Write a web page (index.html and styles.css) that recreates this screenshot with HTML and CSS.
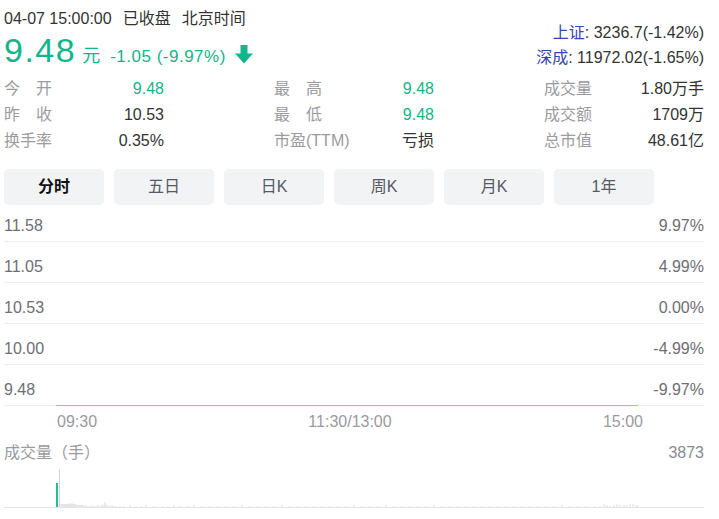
FILE: index.html
```html
<!DOCTYPE html>
<html lang="zh-CN">
<head>
<meta charset="utf-8">
<title>行情</title>
<link rel="stylesheet" href="styles.css">
</head>
<body>
<div class="page">
  <div class="top">
    <div class="quote">
      <div class="status"><span>04-07 15:00:00</span><span class="gap">已收盘</span><span class="gap">北京时间</span></div>
      <div class="price-row">
        <span class="price">9.48</span>
        <span class="unit">元</span>
        <span class="change">-1.05 (-9.97%)</span>
        <svg class="arrow" width="18" height="19" viewBox="0 0 18 19"><rect x="5.5" y="0" width="7" height="10" fill="#13b58b"/><polygon points="0,8.5 18,8.5 9,18.5" fill="#13b58b"/></svg>
      </div>
    </div>
    <div class="indices">
      <div class="idx"><span class="idx-name">上证</span>: 3236.7(-1.42%)</div>
      <div class="idx"><span class="idx-name">深成</span>: 11972.02(-1.65%)</div>
    </div>
  </div>

  <div class="stats">
    <div class="cell"><span class="lbl">今　开</span><span class="val green">9.48</span></div>
    <div class="cell"><span class="lbl">最　高</span><span class="val green">9.48</span></div>
    <div class="cell"><span class="lbl">成交量</span><span class="val">1.80万手</span></div>
    <div class="cell"><span class="lbl">昨　收</span><span class="val">10.53</span></div>
    <div class="cell"><span class="lbl">最　低</span><span class="val green">9.48</span></div>
    <div class="cell"><span class="lbl">成交额</span><span class="val">1709万</span></div>
    <div class="cell"><span class="lbl">换手率</span><span class="val">0.35%</span></div>
    <div class="cell"><span class="lbl">市盈(TTM)</span><span class="val">亏损</span></div>
    <div class="cell"><span class="lbl">总市值</span><span class="val">48.61亿</span></div>
  </div>

  <div class="tabs">
    <div class="tab active">分时</div>
    <div class="tab">五日</div>
    <div class="tab">日K</div>
    <div class="tab">周K</div>
    <div class="tab">月K</div>
    <div class="tab">1年</div>
  </div>

  <div class="chart">
    <div class="band first"><span>11.58</span><span>9.97%</span></div>
    <div class="band"><span>11.05</span><span>4.99%</span></div>
    <div class="band"><span>10.53</span><span>0.00%</span></div>
    <div class="band"><span>10.00</span><span>-4.99%</span></div>
    <div class="band"><span>9.48</span><span>-9.97%</span></div>
    <div class="price-line"></div>
  </div>

  <div class="times">
    <span>09:30</span><span>11:30/13:00</span><span>15:00</span>
  </div>

  <div class="vol-head"><span>成交量（手）</span><span class="vol-max">3873</span></div>
  <svg class="vol" width="700" height="46" viewBox="0 0 700 46">
    <line x1="0" y1="44.5" x2="700" y2="44.5" stroke="#e4e4e8" stroke-width="1"/>
    <rect x="52" y="20" width="2" height="24" fill="#1fbf93"/>
    <line x1="55.5" y1="6" x2="55.5" y2="44" stroke="#d2d3d9" stroke-width="1"/>
    <path stroke="#dcdde2" stroke-width="1" fill="none" d="M57 44v-3M58 44v-3M59 44v-3M60 44v-3M61 44v-3M62 44v-3M63 44v-3M64 44v-3M65 44v-4M66 44v-3M67 44v-3M68 44v-4M69 44v-3M70 44v-3M71 44v-3M72 44v-2M73 44v-2M74 44v-2M75 44v-2M76 44v-2M77 44v-2M78 44v-2M79 44v-2M80 44v-1M82 44v-2M84 44v-1M86 44v-1M88 44v-2M90 44v-1M92 44v-1M94 44v-2M96 44v-1M98 44v-2M100 44v-2M101 44v-5M102 44v-2M104 44v-2M106 44v-1M108 44v-2M110 44v-1M112 44v-1M116 44v-1M120 44v-1M126 44v-2M132 44v-1M138 44v-1M142 44v-2M150 44v-1M158 44v-1M164 44v-1M170 44v-2M176 44v-1M184 44v-1M190 44v-2M198 44v-1M206 44v-1M214 44v-1M222 44v-1M230 44v-1M238 44v-2M246 44v-1M254 44v-1M262 44v-1M270 44v-1M278 44v-2M286 44v-1M294 44v-1M302 44v-1M310 44v-1M318 44v-1M326 44v-1M334 44v-1M342 44v-1M350 44v-2M358 44v-1M366 44v-1M374 44v-1M382 44v-2M390 44v-1M398 44v-1M406 44v-1M414 44v-1M422 44v-1M430 44v-2M438 44v-1M446 44v-1M454 44v-1M462 44v-1M470 44v-1M478 44v-1M486 44v-1M494 44v-1M502 44v-1M510 44v-1M518 44v-1M526 44v-1M534 44v-1M542 44v-1M550 44v-1M558 44v-2M566 44v-1M574 44v-1M582 44v-1M590 44v-1M596 44v-1M600 44v-3M603 44v-2M606 44v-1M610 44v-2M613 44v-3M616 44v-2M620 44v-2M623 44v-2M626 44v-3M629 44v-3M632 44v-2M634 44v-2"/>
  </svg>
</div>
</body>
</html>
```

FILE: styles.css
```css
html, body {
  margin: 0;
  padding: 0;
  background: #ffffff;
}

body {
  font-family: "Liberation Sans", "Noto Sans CJK SC", sans-serif;
  color: #333333;
  font-size: 16px;
}

.page {
  width: 700px;
  margin-left: 4px;
}

.top {
  display: flex;
  justify-content: space-between;
  align-items: flex-start;
}

.status {
  padding-top: 7px;
  height: 24px;
  line-height: 24px;
  font-size: 16px;
  color: #333333;
  white-space: nowrap;
}

.status .gap {
  margin-left: 11px;
}

.price-row {
  display: flex;
  align-items: baseline;
  height: 38px;
  line-height: 38px;
  color: #13b58b;
  white-space: nowrap;
}

.price {
  font-size: 34px;
  letter-spacing: 1.5px;
}

.unit {
  font-size: 18px;
  margin-left: 6px;
}

.change {
  font-size: 17px;
  letter-spacing: 0.5px;
  margin-left: 10px;
}

.arrow {
  margin-left: 9px;
  align-self: center;
  margin-top: 8px;
}

.indices {
  padding-top: 20px;
  text-align: right;
}

.idx {
  height: 25px;
  line-height: 25px;
  font-size: 16px;
  color: #333333;
  white-space: nowrap;
}

.idx-name {
  color: #3446b4;
}

.stats {
  margin-top: 6px;
  display: grid;
  grid-template-columns: 160px 160px 160px;
  column-gap: 110px;
}

.cell {
  display: flex;
  justify-content: space-between;
  height: 26px;
  line-height: 26px;
  white-space: nowrap;
}

.lbl {
  color: #9b9ba0;
}

.val {
  color: #333333;
}

.val.green {
  color: #13b58b;
}

.tabs {
  margin-top: 15px;
  display: flex;
  gap: 10px;
}

.tab {
  width: 100px;
  height: 36px;
  line-height: 36px;
  text-align: center;
  background: #f2f3f5;
  border-radius: 5px;
  color: #555a66;
  font-size: 16px;
}

.tab.active {
  color: #111111;
  font-weight: bold;
}

.chart {
  position: relative;
}

.band {
  display: flex;
  justify-content: space-between;
  align-items: flex-end;
  height: 40px;
  border-bottom: 1px solid #eeeef0;
  box-sizing: content-box;
  color: #6e6e76;
  font-size: 16px;
  line-height: 20px;
}

.band span {
  margin-bottom: 5px;
}

.band.first {
  height: 36px;
}

.price-line {
  position: absolute;
  left: 52px;
  width: 582px;
  bottom: 0;
  height: 1px;
  background: #f5b800;
}

.times {
  display: flex;
  justify-content: space-between;
  width: 586px;
  margin-left: 53px;
  padding-top: 6px;
  line-height: 20px;
  color: #9a9aa2;
  font-size: 16px;
}

.vol-head {
  display: flex;
  justify-content: space-between;
  margin-top: 11px;
  line-height: 20px;
  color: #9a9aa2;
  font-size: 16px;
}

.vol-max {
  color: #8a8a92;
}

.vol {
  display: block;
}
```
